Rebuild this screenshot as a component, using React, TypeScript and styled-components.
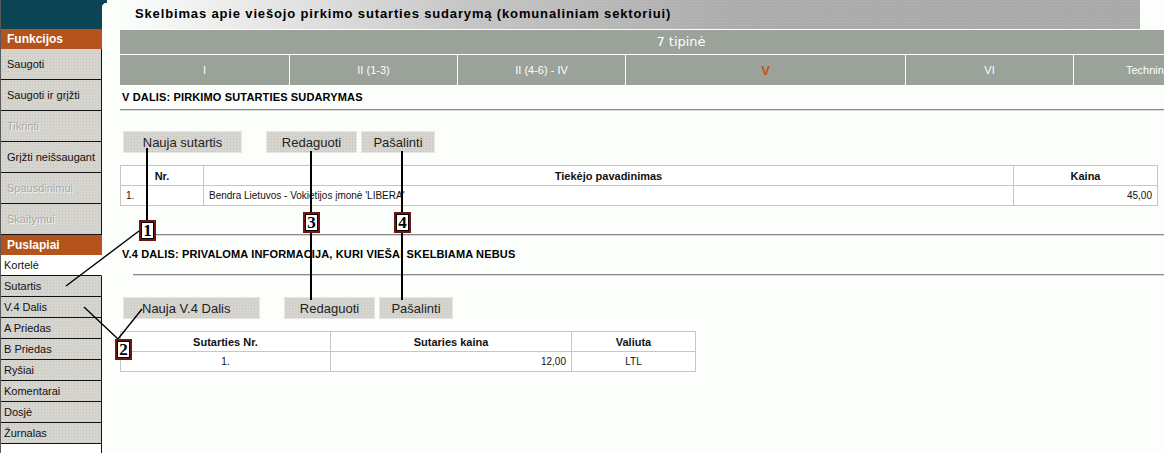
import styled, { createGlobalStyle } from 'styled-components'

const GlobalStyle = createGlobalStyle`
  html, body {
    margin: 0;
    padding: 0;
    background: #fcfefc;
  }
  body {
    font-family: "Liberation Sans", Arial, sans-serif;
    color: #111;
  }
`

const texture = `
  background-color: #d6d4cf;
  background-image: radial-gradient(#c6c4be 0.6px, transparent 0.8px);
  background-size: 3px 3px;
`

const Page = styled.div`
  position: relative;
  display: flex;
  width: 1164px;
  height: 453px;
  overflow: hidden;
  background: #fcfefc;
`

const Sidebar = styled.nav`
  flex: none;
  width: 102px;
  display: flex;
  flex-direction: column;
  border-left: 1px solid #5a5a5a;
  box-sizing: border-box;
`

const SideTop = styled.div`
  position: relative;
  height: 29px;
  background: #0b4454;

  &::after {
    content: '';
    position: absolute;
    left: 100%;
    top: 0;
    width: 5px;
    height: 8px;
    background: radial-gradient(circle at 100% 100%, transparent 5px, #0b4454 5.6px);
  }
`

const SideHeader = styled.div`
  height: 20px;
  line-height: 21px;
  padding-left: 6px;
  background: #b5531d;
  color: #fff;
  font-weight: bold;
  font-size: 12px;
`

const FuncItem = styled.div<{ $disabled?: boolean }>`
  height: 30px;
  line-height: 30px;
  padding-left: 6px;
  border-bottom: 1px solid #111;
  border-right: 1px solid #111;
  ${texture}
  font-size: 11px;
  color: ${p => (p.$disabled ? '#a9a9a9' : '#111')};
  text-shadow: ${p => (p.$disabled ? '1px 1px 0 #f4f4f4' : 'none')};
  white-space: nowrap;
`

const PageItem = styled.div<{ $active?: boolean }>`
  height: 20px;
  line-height: 20px;
  padding-left: 3px;
  border-bottom: 1px solid #111;
  border-right: 1px solid ${p => (p.$active ? 'transparent' : '#111')};
  ${p => (p.$active ? 'background: #fff;' : texture)}
  font-size: 11px;
  color: #111;
  white-space: nowrap;
`

const SideRest = styled.div`
  flex: 1;
  border-right: 1px solid #111;
  background: #fff;
`

const Main = styled.main`
  flex: 1;
  min-width: 0;
  overflow: hidden;
  padding-left: 18px;
`

const TitleBar = styled.div`
  width: 1020px;
  height: 29px;
  line-height: 28px;
  padding-left: 15px;
  box-sizing: border-box;
  background-color: #aaa;
  background-image:
    radial-gradient(rgba(255, 255, 255, 0.12) 0.6px, transparent 0.8px),
    linear-gradient(90deg, #fcfefc 0%, #c4c4c4 35%, #acacac 60%, #a9a9a9 100%);
  background-size: 3px 3px, 100% 100%;
  font-weight: bold;
  font-size: 13px;
  letter-spacing: 0.85px;
  color: #000;
  white-space: nowrap;
`

const Band = styled.div`
  width: 1122px;
  margin-top: 1px;
  background: #9ba299;
`

const BandTitle = styled.div`
  height: 24px;
  line-height: 24px;
  text-align: center;
  color: #fff;
  font-family: "DejaVu Sans", Verdana, sans-serif;
  font-size: 13px;
  border-bottom: 1px solid #fff;
`

const Tabs = styled.div`
  display: grid;
  grid-template-columns: 170px 168px 168px 280px 168px 168px;
  height: 30px;
`

const Tab = styled.div<{ $active?: boolean; $start?: number }>`
  display: flex;
  align-items: center;
  justify-content: ${p => (p.$start ? 'flex-start' : 'center')};
  padding-left: ${p => p.$start ?? 0}px;
  border-right: 1px solid #fff;
  color: ${p => (p.$active ? '#c0521b' : '#fff')};
  font-weight: ${p => (p.$active ? 'bold' : 'normal')};
  font-size: ${p => (p.$active ? '13px' : '11px')};
  white-space: nowrap;
  overflow: hidden;
`

const SectionTitle = styled.h2<{ $top: number }>`
  margin: ${p => p.$top}px 0 0;
  padding-left: 2px;
  height: 13px;
  line-height: 13px;
  font-size: 11px;
  font-weight: bold;
  letter-spacing: 0.15px;
  color: #000;
`

const Rule = styled.hr<{ $top: number; $indent?: number }>`
  margin: ${p => p.$top}px 0 0 ${p => p.$indent ?? 0}px;
  height: 0;
  border: 0;
  border-top: 1px solid #8a8a8a;
  border-bottom: 1px solid #d8d8d8;
`

const ButtonRow = styled.div<{ $top: number }>`
  display: flex;
  gap: 4px;
  margin: ${p => p.$top}px 0 0 3px;
`

const Button = styled.button<{ $w: number; $gap?: number; $pad?: number }>`
  width: ${p => p.$w}px;
  height: 22px;
  margin-right: ${p => p.$gap ?? 0}px;
  padding: 0 0 0 ${p => p.$pad ?? 0}px;
  text-align: ${p => (p.$pad ? 'left' : 'center')};
  border: 1px solid #e6e6e4;
  ${texture}
  font-family: "Liberation Sans", Arial, sans-serif;
  font-size: 13px;
  color: #222;
`

const Table = styled.table<{ $top: number; $w: number }>`
  margin-top: ${p => p.$top}px;
  width: ${p => p.$w}px;
  border-collapse: collapse;
  table-layout: fixed;
  font-size: 10px;
  background: #fff;

  th,
  td {
    height: 19px;
    padding: 0 5px;
    border: 1px solid #c6c6c6;
    white-space: nowrap;
  }

  th {
    font-size: 11px;
    font-weight: bold;
    text-align: center;
  }
`

const Cell = styled.td<{ $align?: 'left' | 'center' | 'right' }>`
  text-align: ${p => p.$align ?? 'left'};
`

const Overlay = styled.svg`
  position: absolute;
  left: 0;
  top: 0;
  pointer-events: none;
`

const Badge = styled.div<{ $x: number; $y: number }>`
  position: absolute;
  left: ${p => p.$x}px;
  top: ${p => p.$y}px;
  width: 17px;
  height: 21px;
  box-sizing: border-box;
  border: 2px solid #6e1616;
  box-shadow: inset 0 0 0 1px #000;
  background: #fff;
  font-family: "Liberation Serif", "Times New Roman", serif;
  font-weight: bold;
  font-size: 17px;
  line-height: 18px;
  text-align: center;
  color: #000;
`

const functions = [
  { label: 'Saugoti' },
  { label: 'Saugoti ir grįžti' },
  { label: 'Tikrinti', disabled: true },
  { label: 'Grįžti neišsaugant' },
  { label: 'Spausdinimui', disabled: true },
  { label: 'Skaitymui', disabled: true }
]

const pages = ['Kortelė', 'Sutartis', 'V.4 Dalis', 'A Priedas', 'B Priedas', 'Ryšiai', 'Komentarai', 'Dosjė', 'Žurnalas']

const tabs = ['I', 'II (1-3)', 'II (4-6) - IV', 'V', 'VI', 'Techninė']

const callouts = [
  { n: '1', x: 139, y: 220 },
  { n: '2', x: 115, y: 339 },
  { n: '3', x: 303, y: 212 },
  { n: '4', x: 394, y: 212 }
]

function App() {
  return (
    <Page>
      <GlobalStyle />
      <Sidebar>
        <SideTop />
        <SideHeader>Funkcijos</SideHeader>
        {functions.map(f => (
          <FuncItem key={f.label} $disabled={f.disabled}>
            {f.label}
          </FuncItem>
        ))}
        <SideHeader>Puslapiai</SideHeader>
        {pages.map((p, i) => (
          <PageItem key={p} $active={i === 0}>
            {p}
          </PageItem>
        ))}
        <SideRest />
      </Sidebar>

      <Main>
        <TitleBar>Skelbimas apie viešojo pirkimo sutarties sudarymą (komunaliniam sektoriui)</TitleBar>
        <Band>
          <BandTitle>7 tipinė</BandTitle>
          <Tabs>
            {tabs.map((t, i) => (
              <Tab key={t} $active={t === 'V'} $start={i === tabs.length - 1 ? 52 : undefined}>
                {t}
              </Tab>
            ))}
          </Tabs>
        </Band>

        <SectionTitle $top={6}>V DALIS: PIRKIMO SUTARTIES SUDARYMAS</SectionTitle>
        <Rule $top={5} />
        <ButtonRow $top={20}>
          <Button $w={119} $gap={20}>Nauja sutartis</Button>
          <Button $w={91}>Redaguoti</Button>
          <Button $w={74}>Pašalinti</Button>
        </ButtonRow>
        <Table $top={12} $w={1037}>
          <colgroup>
            <col style={{ width: 83 }} />
            <col style={{ width: 810 }} />
            <col style={{ width: 144 }} />
          </colgroup>
          <thead>
            <tr>
              <th>Nr.</th>
              <th>Tiekėjo pavadinimas</th>
              <th>Kaina</th>
            </tr>
          </thead>
          <tbody>
            <tr>
              <Cell>1.</Cell>
              <Cell>Bendra Lietuvos - Vokietijos įmonė 'LIBERA'</Cell>
              <Cell $align="right">45,00</Cell>
            </tr>
          </tbody>
        </Table>
        <Rule $top={28} $indent={35} />

        <SectionTitle $top={12}>V.4 DALIS: PRIVALOMA INFORMACIJA, KURI VIEŠAI SKELBIAMA NEBUS</SectionTitle>
        <Rule $top={13} $indent={13} />
        <ButtonRow $top={21}>
          <Button $w={137} $gap={20} $pad={18}>Nauja V.4 Dalis</Button>
          <Button $w={91}>Redaguoti</Button>
          <Button $w={74}>Pašalinti</Button>
        </ButtonRow>
        <Table $top={12} $w={575}>
          <colgroup>
            <col style={{ width: 210 }} />
            <col style={{ width: 241 }} />
            <col style={{ width: 124 }} />
          </colgroup>
          <thead>
            <tr>
              <th>Sutarties Nr.</th>
              <th>Sutaries kaina</th>
              <th>Valiuta</th>
            </tr>
          </thead>
          <tbody>
            <tr>
              <Cell $align="center">1.</Cell>
              <Cell $align="right">12,00</Cell>
              <Cell $align="center">LTL</Cell>
            </tr>
          </tbody>
        </Table>
      </Main>

      <Overlay width="1164" height="453" viewBox="0 0 1164 453">
        <g stroke="#000" fill="none">
          <line x1="147" y1="148" x2="147" y2="221" strokeWidth="2" />
          <line x1="66" y1="286" x2="139" y2="231" strokeWidth="1.4" />
          <line x1="311" y1="151" x2="311" y2="300" strokeWidth="2" />
          <line x1="402" y1="151" x2="402" y2="300" strokeWidth="2" />
          <line x1="84" y1="307" x2="118" y2="339" strokeWidth="1.4" />
          <line x1="118" y1="339" x2="142" y2="309" strokeWidth="1.4" />
        </g>
      </Overlay>
      {callouts.map(c => (
        <Badge key={c.n} $x={c.x} $y={c.y}>
          {c.n}
        </Badge>
      ))}
    </Page>
  )
}

export default App
